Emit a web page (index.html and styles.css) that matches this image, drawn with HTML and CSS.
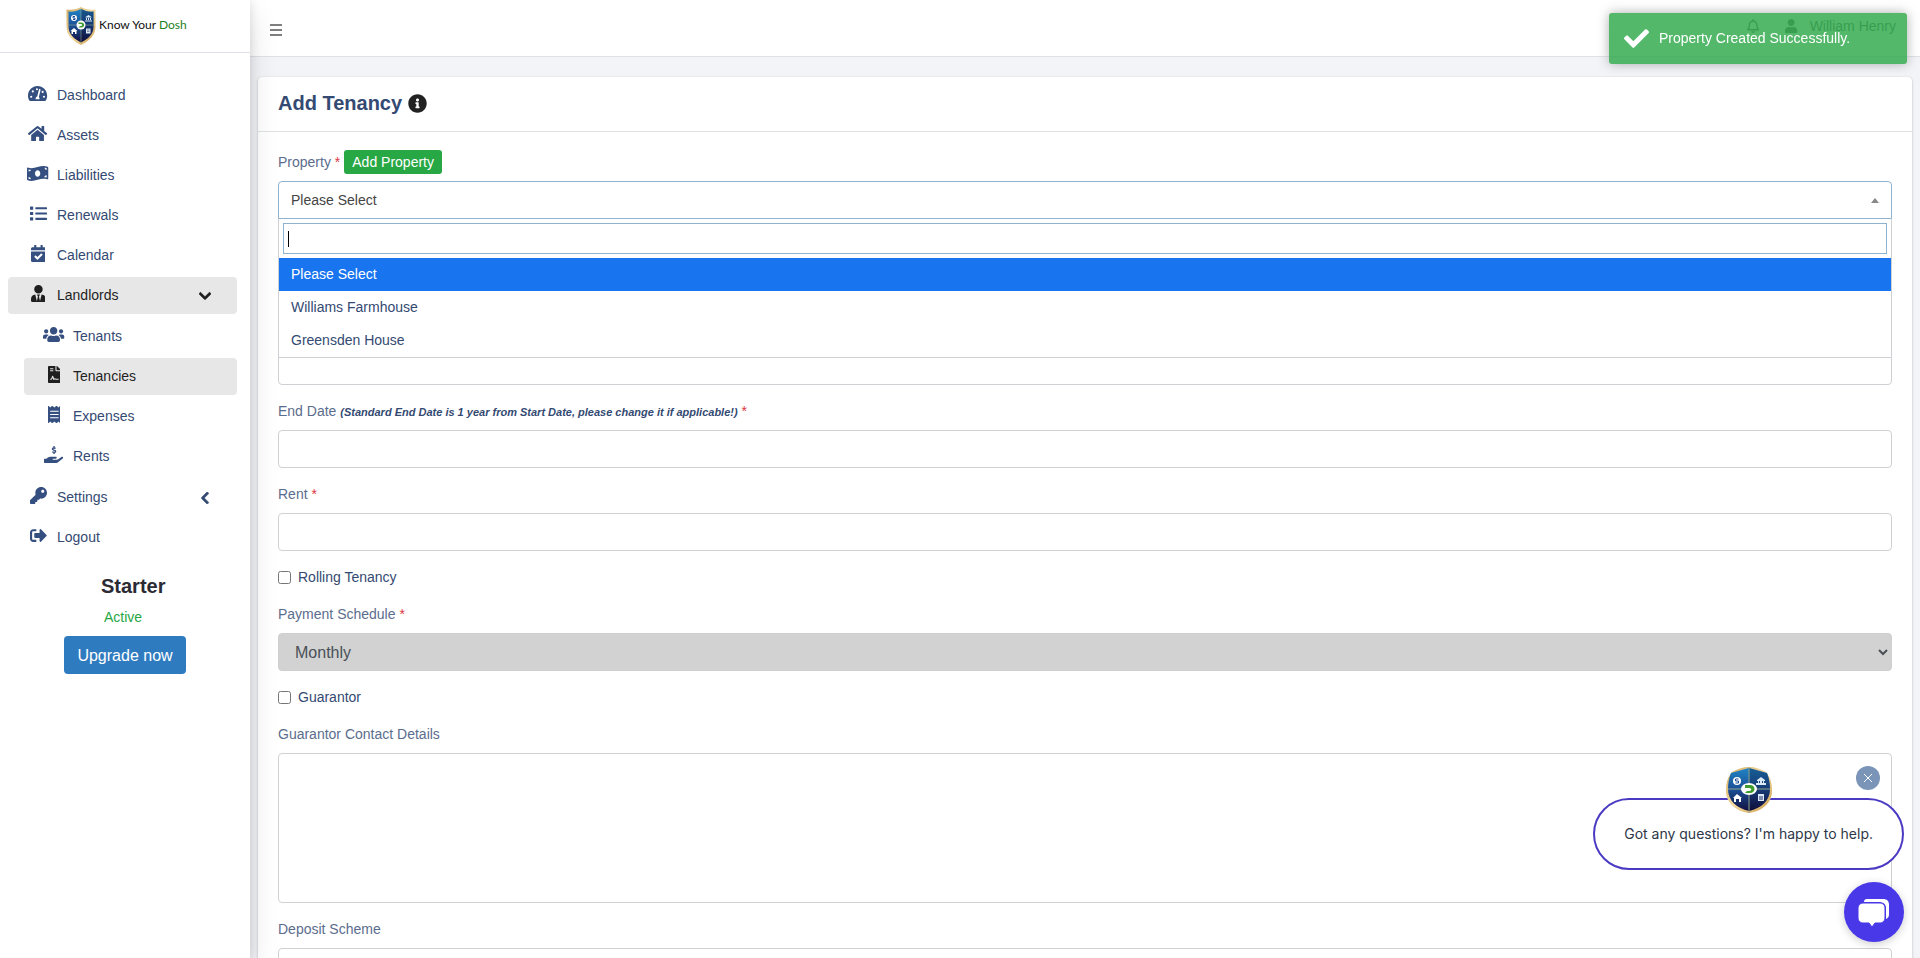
FILE: index.html
```html
<!DOCTYPE html>
<html lang="en">
<head>
  <meta charset="UTF-8">
  <meta name="viewport" content="width=device-width, initial-scale=1.0">
  <title>Add Tenancy - Know Your Dosh</title>
  <link rel="stylesheet" href="styles.css">
</head>
<body>
  <!-- Shared shield logo -->
  <svg class="sprite" aria-hidden="true">
    <defs>
      <linearGradient id="shieldBlue" x1="0" y1="0" x2="0" y2="1">
        <stop offset="0" stop-color="#1f83c4"/>
        <stop offset="0.5" stop-color="#1c4f96"/>
        <stop offset="1" stop-color="#11103f"/>
      </linearGradient>
      <linearGradient id="shieldGold" x1="0" y1="0" x2="1" y2="1">
        <stop offset="0" stop-color="#d3ab62"/>
        <stop offset="0.5" stop-color="#f3d9a0"/>
        <stop offset="1" stop-color="#c99b4c"/>
      </linearGradient>
    </defs>
    <symbol id="shield" viewBox="0 0 60 76" preserveAspectRatio="none">
      <path fill="url(#shieldGold)" d="M30 0c8 5 18 6 29 5v34c0 18-13 29-29 37C14 68 1 57 1 39V5c11 1 21 0 29-5z"/>
      <path fill="url(#shieldBlue)" d="M30 4c8 4 16 6 25 5v30c0 15-11 25-25 32C16 64 5 54 5 39V9c9 1 17-1 25-5z"/>
      <path fill="#0a0a2c" fill-opacity=".35" d="M30 4c8 4 16 6 25 5v30c0 15-11 25-25 32z"/>
      <path stroke="#a9b98a" stroke-width="1" d="M30 3v70M5 36h50"/>
      <circle cx="16" cy="22" r="6" fill="#fff"/>
      <path stroke="#1c4f96" stroke-width="2" fill="none" d="M18 19h-4v3h4v3h-4"/>
      <path fill="#dbe8f5" d="M39 20l6-4 6 4v1H39zM40 22h2v4h-2zM44 22h2v4h-2zM48 22h2v4h-2zM38 27h14v2H38z"/>
      <path fill="#fff" d="M9 48l7-6 7 6h-2v6h-3v-4h-4v4h-3v-6z"/>
      <path fill="#dbe8f5" d="M40 43h9v10h-9z"/>
      <path stroke="#1c2f66" stroke-width="1" d="M42 46h5M42 49h5"/>
      <circle cx="30" cy="36" r="9" fill="#fff"/>
      <path fill="#3f9c2e" d="M25 31h6c7 0 7 10 0 10h-6l3-3h2c3 0 3-4 0-4h-5z"/>
    </symbol>
    <!-- Round crop of the shield for the chat avatar -->
    <symbol id="shieldRound" viewBox="0 0 48 48">
      <circle cx="24" cy="24" r="23" fill="#fbf3e2"/>
      <path fill="url(#shieldGold)" d="M24 1c6 0 12 2 17 5 5 6 6 12 6 19 0 12-10 20-23 22C11 45 1 37 1 25 1 18 2 12 7 6c5-3 11-5 17-5z"/>
      <path fill="url(#shieldBlue)" d="M24 2c6 2 12 3 18 5 2 5 3 10 3 16 0 12-9 19-21 22C12 42 3 35 3 23 3 17 4 12 6 7c6-2 12-3 18-5z"/>
      <path fill="#0a0a2c" fill-opacity=".3" d="M24 2c6 2 12 3 18 5 2 5 3 10 3 16 0 12-9 19-21 22z"/>
      <path stroke="#8fa58a" stroke-width="1" d="M24 1v46M3 23h42"/>
      <circle cx="12" cy="15" r="4" fill="#fff"/>
      <path stroke="#1c4f96" fill="none" d="M13.500 13h-3v2h3v2h-3"/>
      <path fill="#dbe8f5" d="M32 14l4-3 4 3v1h-8zM33 15h1v2h-1zM35 15h2v2h-2zM38 15h1v2h-1zM31 17h10v2H31z"/>
      <path fill="#fff" d="M8 32l4-4 5 4h-1v4h-2v-3h-3v3H9v-4z"/>
      <path fill="#dbe8f5" d="M33 28h6v7h-6z"/>
      <path stroke="#1c2f66" d="M34 31h4M34 33h4"/>
      <ellipse cx="24" cy="23" rx="8" ry="6" fill="#fff"/>
      <path fill="#3f9c2e" d="M20 19h5c6 0 6 8 0 8h-5l2-2h2c3 0 3-3 0-3h-4z"/>
    </symbol>
  </svg>

  <div class="layout">
    <!-- Sidebar -->
    <aside class="sidebar">
      <a href="#" class="brand">
        <svg class="brand-logo"><use href="#shield"/></svg>
        <span class="brand-text">Know Your <span class="brand-accent">Dosh</span></span>
      </a>

      <nav class="nav">
        <a href="#" class="nav-link">
          <span class="nav-icon"><svg viewBox="0 0 576 512"><path d="M288 32C128.94 32 0 160.94 0 320c0 52.8 14.25 102.26 39.06 144.8 5.61 9.62 16.3 15.2 27.44 15.2h443c11.14 0 21.83-5.58 27.44-15.2C561.75 422.26 576 372.8 576 320c0-159.06-128.94-288-288-288z"/><g fill="#fff"><circle cx="96" cy="352" r="32"/><circle cx="144" cy="192" r="32"/><circle cx="270" cy="126" r="30"/><circle cx="480" cy="352" r="32"/><circle cx="440" cy="208" r="32"/><path d="M336 116l46 16-56 230c18 16 26 40 20 70H230c-8-44 14-76 48-84z"/></g></svg></span>
          Dashboard
        </a>
        <a href="#" class="nav-link">
          <span class="nav-icon"><svg viewBox="0 0 576 512"><path d="M280.37 148.26L96 300.11V464a16 16 0 0 0 16 16l112.06-.29a16 16 0 0 0 15.92-16V368a16 16 0 0 1 16-16h64a16 16 0 0 1 16 16v95.64a16 16 0 0 0 16 16.05L464 480a16 16 0 0 0 16-16V300L295.67 148.26a12.19 12.19 0 0 0-15.3 0zM571.6 251.47L488 182.56V44.05a12 12 0 0 0-12-12h-56a12 12 0 0 0-12 12v72.61L318.47 43a48 48 0 0 0-61 0L4.34 251.47a12 12 0 0 0-1.6 16.9l25.5 31A12 12 0 0 0 45.15 301l235.22-193.74a12.19 12.19 0 0 1 15.3 0L530.9 301a12 12 0 0 0 16.9-1.6l25.5-31a12 12 0 0 0-1.7-16.93z"/></svg></span>
          Assets
        </a>
        <a href="#" class="nav-link">
          <span class="nav-icon"><svg viewBox="0 0 640 512"><path d="M621.16 54.46C582.37 38.19 543.55 32 504.75 32c-123.17-.01-246.33 62.34-369.5 62.34-30.89 0-61.76-3.92-92.65-13.72-3.47-1.1-6.95-1.62-10.35-1.62C15.04 79 0 92.32 0 110.81v317.26c0 12.63 7.23 24.6 18.84 29.46C57.63 473.81 96.45 480 135.25 480c123.17 0 246.34-62.35 369.51-62.35 30.89 0 61.76 3.92 92.65 13.72 3.47 1.1 6.95 1.62 10.35 1.62 17.21 0 32.25-13.32 32.25-31.81V83.93c-.01-12.64-7.24-24.6-18.85-29.47zM320 352c-44.19 0-80-42.99-80-96 0-53.02 35.82-96 80-96s80 42.98 80 96c0 53.03-35.83 96-80 96z"/><path fill="#fff" d="M48 132c24 8 44 9 68 10 0 30-30 52-68 52zM48 364c38 0 64 26 68 64-24 0-46-4-68-12zM592 148c-36 0-62-26-64-62 22 2 44 4 64 12zM592 380c-20-6-46-10-70-10 0-32 30-58 70-58z"/></svg></span>
          Liabilities
        </a>
        <a href="#" class="nav-link">
          <span class="nav-icon"><svg viewBox="0 0 512 512"><path d="M16 48h64c9 0 16 7 16 16v64c0 9-7 16-16 16H16c-9 0-16-7-16-16V64c0-9 7-16 16-16zM16 208h64c9 0 16 7 16 16v64c0 9-7 16-16 16H16c-9 0-16-7-16-16v-64c0-9 7-16 16-16zM16 368h64c9 0 16 7 16 16v64c0 9-7 16-16 16H16c-9 0-16-7-16-16v-64c0-9 7-16 16-16zM176 64h320c9 0 16 7 16 16v32c0 9-7 16-16 16H176c-9 0-16-7-16-16V80c0-9 7-16 16-16zM176 224h320c9 0 16 7 16 16v32c0 9-7 16-16 16H176c-9 0-16-7-16-16v-32c0-9 7-16 16-16zM176 384h320c9 0 16 7 16 16v32c0 9-7 16-16 16H176c-9 0-16-7-16-16v-32c0-9 7-16 16-16z"/></svg></span>
          Renewals
        </a>
        <a href="#" class="nav-link">
          <span class="nav-icon"><svg viewBox="0 0 448 512"><path d="M436 160H12c-6.627 0-12-5.373-12-12v-36c0-26.51 21.49-48 48-48h48V12c0-6.627 5.373-12 12-12h40c6.627 0 12 5.373 12 12v52h128V12c0-6.627 5.373-12 12-12h40c6.627 0 12 5.373 12 12v52h48c26.51 0 48 21.49 48 48v36c0 6.627-5.373 12-12 12zM12 192h424c6.627 0 12 5.373 12 12v260c0 26.51-21.49 48-48 48H48c-26.51 0-48-21.49-48-48V204c0-6.627 5.373-12 12-12zm333.296 95.947l-28.169-28.398c-4.667-4.705-12.265-4.736-16.97-.068L194.12 364.665l-45.98-46.352c-4.667-4.705-12.266-4.736-16.971-.068l-28.397 28.17c-4.705 4.667-4.736 12.265-.068 16.97l82.601 83.269c4.667 4.705 12.265 4.736 16.97.068l142.953-141.805c4.705-4.667 4.736-12.265.068-16.97z"/></svg></span>
          Calendar
        </a>
        <a href="#" class="nav-link active">
          <span class="nav-icon"><svg viewBox="0 0 448 512"><path d="M224 256c70.7 0 128-57.3 128-128S294.7 0 224 0 96 57.3 96 128s57.3 128 128 128zm95.8 32.6L272 480l-32-136 32-56h-96l32 56-32 136-47.8-191.4C56.9 292 0 350.3 0 422.4V464c0 26.5 21.5 48 48 48h352c26.5 0 48-21.5 48-48v-41.6c0-72.1-56.9-130.4-128.2-133.8z"/></svg></span>
          Landlords
          <svg class="nav-arrow" viewBox="0 0 448 512"><path d="M207.029 381.476L12.686 187.132c-9.373-9.373-9.373-24.569 0-33.941l22.667-22.667c9.357-9.357 24.522-9.375 33.901-.04L224 284.505l154.745-154.021c9.379-9.335 24.544-9.317 33.901.04l22.667 22.667c9.373 9.373 9.373 24.569 0 33.941L240.971 381.476c-9.373 9.372-24.569 9.372-33.942 0z"/></svg>
        </a>
        <div class="nav-sub">
          <a href="#" class="nav-link">
            <span class="nav-icon"><svg viewBox="0 0 640 512"><path d="M96 224c35.3 0 64-28.7 64-64s-28.7-64-64-64-64 28.7-64 64 28.7 64 64 64zm448 0c35.3 0 64-28.7 64-64s-28.7-64-64-64-64 28.7-64 64 28.7 64 64 64zm32 32h-64c-17.6 0-33.5 7.1-45.1 18.6 40.3 22.1 68.9 62 75.1 109.4h66c17.7 0 32-14.3 32-32v-32c0-35.3-28.7-64-64-64zm-256 0c61.9 0 112-50.1 112-112S381.9 32 320 32 208 82.1 208 144s50.1 112 112 112zm76.8 32h-8.3c-20.8 10-43.9 16-68.5 16s-47.6-6-68.5-16h-8.3C179.6 288 128 339.6 128 403.2V432c0 26.5 21.5 48 48 48h288c26.5 0 48-21.5 48-48v-28.8c0-63.6-51.6-115.2-115.2-115.2zm-223.7-13.4C161.5 263.1 145.6 256 128 256H64c-35.3 0-64 28.7-64 64v32c0 17.7 14.3 32 32 32h65.9c6.3-47.4 34.9-87.3 75.2-109.4z"/></svg></span>
            Tenants
          </a>
          <a href="#" class="nav-link active">
            <span class="nav-icon"><svg viewBox="0 0 384 512"><path d="M224 136V0H24C10.7 0 0 10.7 0 24v464c0 13.3 10.7 24 24 24h336c13.3 0 24-10.7 24-24V160H248c-13.2 0-24-10.8-24-24z"/><path d="M384 121.9v6.1H256V0h6.1c6.4 0 12.5 2.5 17 7l97.9 98c4.5 4.5 7 10.6 7 16.9z"/><path fill="#e7e7e7" d="M64 64h96v32H64zM64 128h96v32H64z"/><path fill="none" stroke="#e7e7e7" stroke-width="32" stroke-linejoin="round" d="M64 400h24c16 0 24-12 28-24l24-68 36 100c20-34 44-32 60-8h84"/></svg></span>
            Tenancies
          </a>
          <a href="#" class="nav-link">
            <span class="nav-icon"><svg viewBox="0 0 384 512"><path d="M358.4 3.2L320 48 265.6 3.2a15.9 15.9 0 0 0-19.2 0L192 48 137.6 3.2a15.9 15.9 0 0 0-19.2 0L64 48 25.6 3.2C15-4.7 0 2.8 0 16v480c0 13.2 15 20.7 25.6 12.8L64 464l54.4 44.8a15.9 15.9 0 0 0 19.2 0L192 464l54.4 44.8a15.9 15.9 0 0 0 19.2 0L320 464l38.4 44.8c10.5 7.9 25.6.4 25.6-12.8V16c0-13.2-15-20.7-25.6-12.8z"/><path fill="#fff" d="M64 144h256v32H64zM64 240h256v32H64zM64 336h256v32H64z"/></svg></span>
            Expenses
          </a>
          <a href="#" class="nav-link">
            <span class="nav-icon"><svg viewBox="0 0 576 512"><path d="M565.3 328.1c-11.8-10.7-30.2-10-42.6 0L430.3 402c-11.3 9.1-25.4 14-40 14H272c-8.8 0-16-7.2-16-16s7.2-16 16-16h78.3c15.9 0 30.7-10.9 33.3-26.6 3.3-20-12.1-37.4-31.6-37.4H192c-27 0-53.1 9.3-74.1 26.3L71.4 384H16c-8.8 0-16 7.2-16 16v96c0 8.8 7.2 16 16 16h356.8c14.5 0 28.6-4.9 40-14L564 377c15.2-12.1 16.4-35.3 1.3-48.9z"/><path fill="none" stroke="currentColor" stroke-width="40" d="M350 70c-30-14-96-18-98 20 0 40 100 26 100 68 0 38-66 36-102 18M302 0v44M302 196v44"/></svg></span>
            Rents
          </a>
        </div>
        <a href="#" class="nav-link">
          <span class="nav-icon"><svg viewBox="0 0 512 512"><path d="M512 176.001C512 273.203 433.202 352 336 352c-11.22 0-22.19-1.062-32.827-3.069l-24.012 27.014A23.999 23.999 0 0 1 261.223 384H224v40c0 13.255-10.745 24-24 24h-40v40c0 13.255-10.745 24-24 24H24c-13.255 0-24-10.745-24-24v-78.059c0-6.365 2.529-12.47 7.029-16.971l161.802-161.802C163.108 213.814 160 195.271 160 176 160 78.798 238.797.001 335.999 0 433.488-.001 512 78.511 512 176.001zM336 128c0 26.51 21.49 48 48 48s48-21.49 48-48-21.49-48-48-48-48 21.49-48 48z"/></svg></span>
          Settings
          <svg class="nav-arrow closed" viewBox="0 0 448 512"><path d="M207.029 381.476L12.686 187.132c-9.373-9.373-9.373-24.569 0-33.941l22.667-22.667c9.357-9.357 24.522-9.375 33.901-.04L224 284.505l154.745-154.021c9.379-9.335 24.544-9.317 33.901.04l22.667 22.667c9.373 9.373 9.373 24.569 0 33.941L240.971 381.476c-9.373 9.372-24.569 9.372-33.942 0z"/></svg>
        </a>
        <a href="#" class="nav-link">
          <span class="nav-icon"><svg viewBox="0 0 512 512"><path d="M497 273L329 441c-15 15-41 4.5-41-17v-96H152c-13.3 0-24-10.7-24-24v-96c0-13.3 10.7-24 24-24h136V88c0-21.4 25.9-32 41-17l168 168c9.3 9.4 9.3 24.6 0 34zM192 436v-40c0-6.6-5.4-12-12-12H96c-17.7 0-32-14.3-32-32V160c0-17.7 14.3-32 32-32h84c6.6 0 12-5.4 12-12V76c0-6.6-5.4-12-12-12H96c-53 0-96 43-96 96v192c0 53 43 96 96 96h84c6.6 0 12-5.4 12-12z"/></svg></span>
          Logout
        </a>
      </nav>

      <div class="plan">
        <h2 class="plan-name">Starter</h2>
        <p class="plan-status">Active</p>
        <button type="button" class="plan-button">Upgrade now</button>
      </div>
    </aside>

    <!-- Main -->
    <div class="main">
      <header class="topbar">
        <button type="button" class="menu-button" aria-label="Toggle menu">
          <svg viewBox="0 0 12 12"><path d="M0 1h12M0 6h12M0 11h12"/></svg>
        </button>
        <div class="topbar-right">
          <svg class="bell" viewBox="0 0 448 512"><path d="M439.39 362.29c-19.32-20.76-55.47-51.99-55.47-154.29 0-77.7-54.48-139.9-127.94-155.16V32c0-17.67-14.32-32-31.98-32s-31.98 14.33-31.98 32v20.84C118.56 68.1 64.08 130.3 64.08 208c0 102.3-36.15 133.53-55.47 154.29-6 6.45-8.66 14.16-8.61 21.71.11 16.4 12.98 32 32.1 32h383.8c19.12 0 32-15.6 32.1-32 .05-7.55-2.61-15.27-8.61-21.71zM67.53 368c21.22-27.97 44.42-74.33 44.53-159.42 0-.2-.06-.38-.06-.58 0-61.86 50.14-112 112-112s112 50.14 112 112c0 .2-.06.38-.06.58.11 85.1 23.31 131.46 44.53 159.42H67.53zM224 512c35.32 0 63.97-28.65 63.97-64H160.03c0 35.35 28.65 64 63.97 64z"/></svg>
          <a href="#" class="user-link">
            <svg class="user-icon" viewBox="0 0 448 512"><path d="M224 256c70.7 0 128-57.3 128-128S294.7 0 224 0 96 57.3 96 128s57.3 128 128 128zm89.6 32h-16.7c-22.2 10.2-46.9 16-72.9 16s-50.6-5.8-72.9-16h-16.7C60.2 288 0 348.2 0 422.4V464c0 26.5 21.5 48 48 48h352c26.5 0 48-21.5 48-48v-41.6c0-74.2-60.2-134.4-134.4-134.4z"/></svg>
            William Henry
          </a>
        </div>
      </header>

      <main class="card">
        <div class="card-header">
          <h1 class="card-title">Add Tenancy</h1>
          <svg class="info-icon" viewBox="0 0 512 512"><path d="M256 8C119.043 8 8 119.083 8 256c0 136.997 111.043 248 248 248s248-111.003 248-248C504 119.083 392.957 8 256 8zm0 110c23.196 0 42 18.804 42 42s-18.804 42-42 42-42-18.804-42-42 18.804-42 42-42zm56 254c0 6.627-5.373 12-12 12h-88c-6.627 0-12-5.373-12-12v-24c0-6.627 5.373-12 12-12h12v-64h-12c-6.627 0-12-5.373-12-12v-24c0-6.627 5.373-12 12-12h64c6.627 0 12 5.373 12 12v100h12c6.627 0 12 5.373 12 12v24z"/></svg>
        </div>

        <form class="card-body">
          <div class="form-group">
            <div class="label-row">
              <label for="property" class="form-label">Property <span class="required">*</span></label>
              <button type="button" class="add-button">Add Property</button>
            </div>
            <div class="picker">
              <button type="button" id="property" class="picker-toggle" aria-haspopup="listbox" aria-expanded="true">Please Select</button>
              <div class="picker-menu">
                <div class="picker-search-wrap">
                  <input type="search" class="picker-search" aria-label="Search properties">
                </div>
                <ul class="picker-options" role="listbox" aria-label="Properties">
                  <li class="picker-option highlighted" role="option" aria-selected="true">Please Select</li>
                  <li class="picker-option" role="option">Williams Farmhouse</li>
                  <li class="picker-option" role="option">Greensden House</li>
                </ul>
              </div>
            </div>
          </div>

          <div class="form-group no-label">
            <input type="text" class="form-input" aria-label="Tenant">
          </div>

          <div class="form-group no-label">
            <input type="text" class="form-input" aria-label="Start Date">
          </div>

          <div class="form-group">
            <label for="endDate" class="form-label">End Date <em class="hint">(Standard End Date is 1 year from Start Date, please change it if applicable!)</em> <span class="required">*</span></label>
            <input type="text" id="endDate" class="form-input">
          </div>

          <div class="form-group">
            <label for="rent" class="form-label">Rent <span class="required">*</span></label>
            <input type="text" id="rent" class="form-input">
          </div>

          <div class="form-group form-check">
            <input type="checkbox" id="rolling" class="check-input">
            <label for="rolling" class="check-label">Rolling Tenancy</label>
          </div>

          <div class="form-group">
            <label for="schedule" class="form-label">Payment Schedule <span class="required">*</span></label>
            <select id="schedule" class="form-select">
              <option>Monthly</option>
            </select>
          </div>

          <div class="form-group form-check">
            <input type="checkbox" id="guarantor" class="check-input">
            <label for="guarantor" class="check-label">Guarantor</label>
          </div>

          <div class="form-group">
            <label for="guarantorDetails" class="form-label">Guarantor Contact Details</label>
            <textarea id="guarantorDetails" class="form-input form-textarea"></textarea>
          </div>

          <div class="form-group">
            <label for="deposit" class="form-label">Deposit Scheme</label>
            <input type="text" id="deposit" class="form-input">
          </div>
        </form>
      </main>
    </div>
  </div>

  <!-- Toast -->
  <div class="toast" role="status">
    <svg class="toast-icon" viewBox="0 0 512 512"><path d="M173.898 439.404l-166.4-166.4c-9.997-9.997-9.997-26.206 0-36.204l36.203-36.204c9.997-9.998 26.207-9.998 36.204 0L192 312.69 432.095 72.596c9.997-9.997 26.207-9.997 36.204 0l36.203 36.204c9.997 9.997 9.997 26.206 0 36.204l-294.4 294.401c-9.998 9.997-26.207 9.997-36.204-.001z"/></svg>
    Property Created Successfully.
  </div>

  <!-- Chat widget -->
  <div class="chat">
    <button type="button" class="chat-close" aria-label="Close message">
      <svg viewBox="0 0 10 10"><path d="M1 1l8 8M9 1l-8 8"/></svg>
    </button>
    <div class="chat-bubble">
      <svg class="chat-avatar"><use href="#shieldRound"/></svg>
      Got any questions? I'm happy to help.
    </div>
    <button type="button" class="chat-button" aria-label="Open chat">
      <svg viewBox="0 0 32 32"><path d="M9 3h16c4 0 6 2 6 6v9c0 3-1 4-3 5V12c0-4-3-6-7-6H6c0-2 1-3 3-3z"/><path d="M6 7h15c4 0 6 2 6 5v9c0 4-2 6-6 6h-4l-3 4-3-4H6c-4 0-6-2-6-6v-8c0-4 2-6 6-6z"/></svg>
    </button>
  </div>
</body>
</html>
```
FILE: styles.css
```css
:root {
  --text: #344a72;
  --icon: #354f80;
  --border: #ced0d4;
  --focus: #8fb2cf;
  --success: #28a745;
  --danger: #dc3545;
  --chat: #4838e8;
}

* {
  margin: 0;
  padding: 0;
  box-sizing: border-box;
}

body {
  font-family: 'Liberation Sans', Arial, sans-serif;
  font-size: 14px;
  line-height: 21px;
  color: var(--text);
  background: #f2f4f8;
}

button,
input,
select,
textarea {
  font: inherit;
  color: inherit;
}

button {
  border: none;
  cursor: pointer;
}

a {
  color: inherit;
  text-decoration: none;
}

svg {
  fill: currentColor;
}

.sprite {
  position: absolute;
  width: 0;
  height: 0;
}

.layout {
  display: flex;
  height: 100vh;
}

/* Sidebar */
.sidebar {
  width: 250px;
  flex-shrink: 0;
  background: #fff;
  box-shadow: 0 14px 28px rgba(0, 0, 0, 0.12), 0 0 10px rgba(0, 0, 0, 0.12);
  z-index: 1;
}

.brand {
  display: flex;
  align-items: center;
  gap: 3px;
  height: 53px;
  padding-left: 66px;
  border-bottom: 1px solid #dee2e6;
}

.brand-logo {
  width: 30px;
  height: 38px;
}

.brand-text {
  padding-bottom: 3px;
  font-family: Lato, sans-serif;
  font-size: 12px;
  color: #111;
}

.brand-accent {
  color: #1f8022;
}

.nav {
  display: flex;
  flex-direction: column;
  gap: 3px;
  padding: 24px 13px 0 8px;
}

.nav-sub {
  display: flex;
  flex-direction: column;
  gap: 3px;
  margin: 1px 0;
  padding-left: 16px;
}

.nav-link {
  display: flex;
  align-items: center;
  gap: 5px;
  height: 37px;
  padding: 0 26px 0 16px;
  border-radius: 4px;
}

.nav-link.active {
  background: #e7e7e7;
  color: #1f1f1f;
}

.nav-icon {
  display: flex;
  justify-content: center;
  width: 28px;
  padding-bottom: 5px;
  color: var(--icon);
}

.nav-icon svg {
  height: 17px;
}

.nav-link.active .nav-icon {
  color: inherit;
}

.nav-arrow {
  width: 12px;
  height: 14px;
  margin-left: auto;
  stroke: currentColor;
  stroke-width: 30;
}

.nav-arrow.closed {
  transform: rotate(90deg);
}

.plan {
  padding: 18px 64px;
}

.plan-name {
  padding-left: 37px;
  font-size: 20px;
  line-height: 24px;
  color: #2b2b33;
}

.plan-status {
  margin: 9px 0 8px;
  padding-left: 40px;
  color: var(--success);
}

.plan-button {
  height: 38px;
  width: 100%;
  border-radius: 4px;
  background: #2f7bbf;
  color: #fff;
  font-size: 16px;
  white-space: nowrap;
}

/* Main */
.main {
  flex: 1;
  min-width: 0;
  overflow-y: auto;
  scrollbar-width: none;
}

.topbar {
  display: flex;
  align-items: center;
  justify-content: space-between;
  height: 57px;
  padding: 0 24px 0 20px;
  background: #fff;
  border-bottom: 1px solid #dee2e6;
}

.menu-button {
  display: flex;
  padding-top: 4px;
  background: none;
}

.menu-button svg {
  width: 12px;
  height: 12px;
  stroke: #7f7f7f;
  stroke-width: 2;
}

.topbar-right {
  display: flex;
  align-items: center;
  gap: 26px;
  height: 56px;
  padding-bottom: 4px;
  color: #7a7a7a;
}

.user-link {
  display: flex;
  align-items: center;
  gap: 12px;
}

.bell,
.user-icon {
  height: 14px;
}

/* Card */
.card {
  margin: 20px 8px;
  background: #fff;
  border-radius: 4px;
  box-shadow: 0 0 1px rgba(0, 0, 0, 0.13), 0 1px 3px rgba(0, 0, 0, 0.2);
}

.card-header {
  display: flex;
  align-items: center;
  gap: 6px;
  height: 55px;
  padding: 0 20px 2px;
  border-bottom: 1px solid #dfe1e4;
}

.card-title {
  font-size: 20px;
  line-height: 24px;
}

.info-icon {
  width: 19px;
  height: 19px;
  color: #222;
}

.card-body {
  padding: 18px 20px;
}

.form-group {
  margin-bottom: 16px;
}

.form-group.no-label {
  padding-top: 29px;
}

.label-row {
  display: flex;
  gap: 4px;
  align-items: center;
  margin-bottom: 7px;
}

.form-label {
  display: block;
  margin-bottom: 8px;
  color: #5b6d8d;
}

.label-row .form-label {
  margin-bottom: 0;
}

.required {
  color: var(--danger);
}

.hint {
  font-size: 11px;
  line-height: 11px;
  font-weight: 700;
  color: var(--text);
}

.add-button {
  height: 24px;
  padding: 0 8px;
  border-radius: 3px;
  background: var(--success);
  color: #fff;
}

.form-input {
  display: block;
  width: 100%;
  height: 38px;
  padding: 0 12px;
  border: 1px solid var(--border);
  border-radius: 4px;
  background: #fff;
}

.form-textarea {
  height: 150px;
  padding: 6px 12px;
  resize: none;
}

.form-select {
  display: block;
  width: 100%;
  height: 38px;
  padding-left: 12px;
  border: 1px solid #cfcfcf;
  border-radius: 4px;
  background: #d2d2d2;
  color: #495057;
  font-size: 16px;
}

.form-check {
  display: flex;
  align-items: center;
  gap: 7px;
}

.check-input {
  width: 13px;
  height: 13px;
}

/* Property picker */
.picker {
  position: relative;
}

.picker-toggle {
  display: flex;
  align-items: center;
  justify-content: space-between;
  width: 100%;
  height: 38px;
  padding: 0 12px;
  border: 1px solid var(--focus);
  border-radius: 4px 4px 0 0;
  background: #fff;
  color: #444;
}

.picker-toggle::after {
  content: '';
  border: 4px solid transparent;
  border-top: none;
  border-bottom: 5px solid #888;
}

.picker-menu {
  position: absolute;
  top: 100%;
  left: 0;
  right: 0;
  background: #fff;
  border: 1px solid var(--border);
  border-top: none;
  z-index: 2;
}

.picker-search-wrap {
  padding: 4px;
}

.picker-search {
  display: block;
  width: 100%;
  height: 31px;
  padding: 4px;
  border: 1px solid var(--focus);
  outline: none;
  /* text cursor */
  background: linear-gradient(#000, #000) 4px center / 1px 16px no-repeat;
}

.picker-options {
  list-style: none;
}

.picker-option {
  padding: 6px 12px;
}

.picker-option.highlighted {
  background: #1874ef;
  color: #fff;
}

/* Toast */
.toast {
  position: fixed;
  top: 13px;
  right: 13px;
  display: flex;
  align-items: center;
  gap: 10px;
  width: 298px;
  height: 51px;
  padding: 0 15px;
  border-radius: 3px;
  background: var(--success);
  box-shadow: 0 0 12px #999;
  color: #fff;
  opacity: 0.8;
  z-index: 10;
}

.toast-icon {
  width: 25px;
  height: 25px;
}

/* Chat widget */
.chat {
  position: fixed;
  right: 16px;
  bottom: 16px;
  display: flex;
  flex-direction: column;
  align-items: flex-end;
  z-index: 9;
}

.chat-close {
  display: flex;
  align-items: center;
  justify-content: center;
  width: 24px;
  height: 24px;
  margin: 0 24px 8px 0;
  border-radius: 50%;
  background: #7b95b8;
}

.chat-close svg {
  width: 10px;
  height: 10px;
  stroke: #fff;
}

.chat-bubble {
  position: relative;
  padding: 24px 29px;
  border: 2px solid #4b3bc4;
  border-radius: 36px;
  background: #fff;
  font-family: Inter, sans-serif;
  line-height: 20px;
  color: #2d3748;
}

.chat-avatar {
  position: absolute;
  top: -34px;
  left: calc(50% - 24px);
  width: 48px;
  height: 48px;
}

.chat-button {
  display: flex;
  align-items: center;
  justify-content: center;
  width: 60px;
  height: 60px;
  margin-top: 12px;
  border-radius: 50%;
  background: var(--chat);
  color: #fff;
  box-shadow: 0 2px 8px rgba(0, 0, 0, 0.2);
}

.chat-button svg {
  width: 32px;
  height: 32px;
}

.chat-button path:last-child {
  stroke: var(--chat);
  stroke-width: 1;
}
```
